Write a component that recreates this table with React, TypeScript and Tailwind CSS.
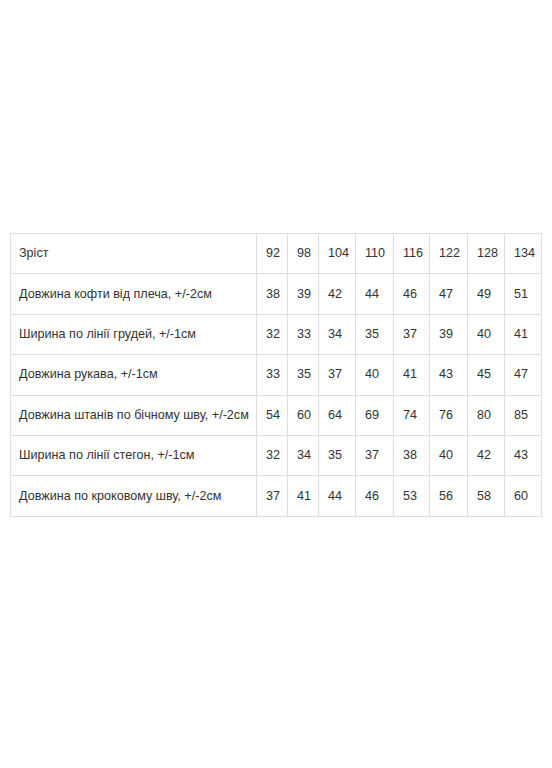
const sizes = ['92', '98', '104', '110', '116', '122', '128', '134'];

const rows: { label: string; values: string[] }[] = [
  { label: 'Довжина кофти від плеча, +/-2см', values: ['38', '39', '42', '44', '46', '47', '49', '51'] },
  { label: 'Ширина по лінії грудей, +/-1см', values: ['32', '33', '34', '35', '37', '39', '40', '41'] },
  { label: 'Довжина рукава, +/-1см', values: ['33', '35', '37', '40', '41', '43', '45', '47'] },
  { label: 'Довжина штанів по бічному шву, +/-2см', values: ['54', '60', '64', '69', '74', '76', '80', '85'] },
  { label: 'Ширина по лінії стегон, +/-1см', values: ['32', '34', '35', '37', '38', '40', '42', '43'] },
  { label: 'Довжина по кроковому шву, +/-2см', values: ['37', '41', '44', '46', '53', '56', '58', '60'] },
];

const colWidths = ['w-[246px]', 'w-[31px]', 'w-[31px]', 'w-[37px]', 'w-[38px]', 'w-[36px]', 'w-[38px]', 'w-[37px]', 'w-[37px]'];

const Row = ({ label, values }: { label: string; values: string[] }) => (
  <tr className="h-[40.4px]">
    <td className="border border-[#dedede] pl-[8px] align-middle whitespace-nowrap">{label}</td>
    {values.map((v, i) => (
      <td key={i} className="border border-[#dedede] pl-[9px] align-middle whitespace-nowrap">
        {v}
      </td>
    ))}
  </tr>
);

export default function App() {
  return (
    <div className="w-[552px] h-[768px] bg-white pt-[233px] pl-[10px] font-[family-name:'Liberation_Sans',Arial,sans-serif] text-[12.6px] text-[#333333]">
      <table className="table-fixed border-collapse w-[531px]">
        <colgroup>
          {colWidths.map((w, i) => (
            <col key={i} className={w} />
          ))}
        </colgroup>
        <tbody>
          <Row label="Зріст" values={sizes} />
          {rows.map((r) => (
            <Row key={r.label} label={r.label} values={r.values} />
          ))}
        </tbody>
      </table>
    </div>
  );
}
